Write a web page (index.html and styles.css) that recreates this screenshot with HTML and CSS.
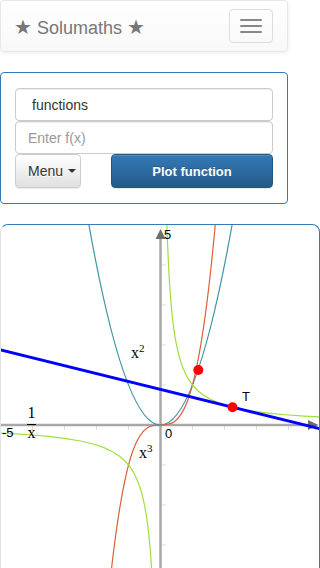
FILE: index.html
```html
<!DOCTYPE html>
<html lang="en">
<head>
<meta charset="utf-8">
<meta name="viewport" content="width=device-width, initial-scale=1">
<title>Solumaths</title>
<link rel="stylesheet" href="styles.css">
</head>
<body>
<div class="page">
  <nav class="navbar">
    <a class="brand" href="#"><span class="star">★</span> Solumaths <span class="star">★</span></a>
    <button class="toggle" type="button" aria-label="Toggle navigation">
      <span class="bar"></span><span class="bar"></span><span class="bar"></span>
    </button>
  </nav>

  <div class="form-panel">
    <input class="field field-search" type="text" value="functions">
    <input class="field field-fx" type="text" placeholder="Enter f(x)">
    <div class="actions">
      <button class="btn btn-menu" type="button">Menu <span class="caret"></span></button>
      <button class="btn btn-plot" type="button">Plot function</button>
    </div>
  </div>

  <div class="graph-panel">
    <svg class="graph" width="318" height="400" viewBox="1 0 318 400" xmlns="http://www.w3.org/2000/svg">
      <g class="ticks">
        <line x1="32.5" y1="200" x2="32.5" y2="205"/>
        <line x1="64.5" y1="200" x2="64.5" y2="205"/>
        <line x1="96.5" y1="200" x2="96.5" y2="205"/>
        <line x1="128.5" y1="200" x2="128.5" y2="205"/>
        <line x1="192.5" y1="200" x2="192.5" y2="205"/>
        <line x1="224.5" y1="200" x2="224.5" y2="205"/>
        <line x1="256.5" y1="200" x2="256.5" y2="205"/>
        <line x1="288.5" y1="200" x2="288.5" y2="205"/>
        <line x1="160.5" y1="40" x2="166" y2="40"/>
        <line x1="160.5" y1="80" x2="166" y2="80"/>
        <line x1="160.5" y1="120" x2="166" y2="120"/>
        <line x1="160.5" y1="160" x2="166" y2="160"/>
        <line x1="160.5" y1="240" x2="166" y2="240"/>
        <line x1="160.5" y1="280" x2="166" y2="280"/>
        <line x1="160.5" y1="320" x2="166" y2="320"/>
        <line x1="160.5" y1="360" x2="166" y2="360"/>
      </g>
      <g class="axes">
        <line x1="0" y1="200" x2="309" y2="200"/>
        <line x1="160.5" y1="12" x2="160.5" y2="400"/>
      </g>
      <g class="arrows">
        <polygon points="160.5,4 155.5,14 165.5,14"/>
        <polygon points="318.5,200 308,195 308,205"/>
      </g>
      <path class="curve sq" d="M88.5,-2.5 Q160.5,402.5 232.5,-2.5"/>
      <path class="curve cube" d="M105.46,403.5 C142.15,-3.5 178.85,403.5 215.54,-3.5"/>
      <path class="curve inv" d="M166.58,-10.5 L166.9,0 L167.54,18.18 L168.5,40 L169.46,57.14 L170.74,75 L172.02,88.89 L173.3,100 L174.9,111.11 L176.5,120 L178.42,128.57 L180.66,136.51 L182.9,142.86 L186.1,150 L189.3,155.56 L192.5,160 L197.3,165.22 L202.1,169.23 L208.5,173.33 L216.5,177.14 L224.5,180 L240.5,184 L256.5,186.67 L272.5,188.57 L288.5,190 L304.5,191.11 L320.5,192"/>
      <path class="curve inv" d="M154.42,410.5 L154.1,400 L153.46,381.82 L152.5,360 L151.54,342.86 L150.26,325 L148.98,311.11 L147.7,300 L146.1,288.89 L144.5,280 L142.58,271.43 L140.34,263.49 L138.1,257.14 L134.9,250 L131.7,244.44 L128.5,240 L123.7,234.78 L118.9,230.77 L112.5,226.67 L104.5,222.86 L96.5,220 L80.5,216 L64.5,213.33 L48.5,211.43 L32.5,210 L16.5,208.89 L0.5,208"/>
      <line class="tangent" x1="-1" y1="124.57" x2="322" y2="204.32"/>
      <circle class="dot" cx="198.3" cy="145" r="5"/>
      <circle class="dot" cx="232.5" cy="182.2" r="5"/>
      <text class="num" x="164" y="14">5</text>
      <text class="num" x="2" y="212">-5</text>
      <text class="num" x="165" y="213">0</text>
      <text class="num" x="242" y="176">T</text>
      <text class="math" x="131" y="133">x<tspan class="sup" dy="-6">2</tspan></text>
      <text class="math" x="139" y="233">x<tspan class="sup" dy="-6">3</tspan></text>
      <text class="math" x="27.5" y="193">1</text>
      <line class="frac" x1="27" y1="199.5" x2="36" y2="199.5"/>
      <text class="math" x="27.5" y="213">x</text>
    </svg>
  </div>
</div>
</body>
</html>
```
FILE: styles.css
```css
html, body {
  margin: 0;
  padding: 0;
  overflow: hidden;
  background: #fff;
}

body {
  font-family: "Liberation Sans", Arial, sans-serif;
  font-size: 14px;
  color: #333;
}

.navbar {
  display: flex;
  justify-content: space-between;
  align-items: flex-start;
  box-sizing: border-box;
  width: 288px;
  height: 52px;
  margin-bottom: 20px;
  border: 1px solid #e7e7e7;
  border-radius: 4px;
  background: linear-gradient(to bottom, #fff 0, #f8f8f8 100%);
  box-shadow: inset 0 1px 0 rgba(255, 255, 255, .15), 0 1px 5px rgba(0, 0, 0, .075);
}

.brand {
  display: block;
  padding: 16px 14px 0 13px;
  font-size: 18px;
  line-height: 20px;
  color: #777;
  text-decoration: none;
  white-space: nowrap;
}

.star {
  font-family: "DejaVu Sans", sans-serif;
  font-size: 20px;
  line-height: 20px;
}

.toggle {
  display: flex;
  flex-direction: column;
  align-items: center;
  justify-content: center;
  gap: 4px;
  box-sizing: border-box;
  width: 44px;
  height: 34px;
  margin: 8px 14px 0 0;
  padding: 0;
  border: 1px solid #ddd;
  border-radius: 4px;
  background: transparent;
}

.bar {
  display: block;
  width: 22px;
  height: 2px;
  border-radius: 1px;
  background: #888;
}

.form-panel {
  box-sizing: border-box;
  width: 288px;
  margin-bottom: 20px;
  padding: 15px 14px;
  border: 1px solid #337ab7;
  border-radius: 4px;
  background: #fff;
}

.field {
  display: block;
  box-sizing: border-box;
  width: 100%;
  height: 33px;
  margin: 0;
  padding: 0 12px;
  border: 1px solid #ccc;
  border-radius: 4px;
  font-family: "Liberation Sans", Arial, sans-serif;
  font-size: 14px;
  color: #333;
  background: #fff;
  box-shadow: inset 0 1px 1px rgba(0, 0, 0, .075);
  outline: none;
}

.field-search {
  padding-left: 16px;
}

.field::placeholder {
  color: #999;
  font-size: 14px;
  opacity: 1;
}

.actions {
  display: flex;
  justify-content: space-between;
  height: 34px;
}

.btn {
  box-sizing: border-box;
  height: 34px;
  margin: 0;
  border-radius: 4px;
  font-family: "Liberation Sans", Arial, sans-serif;
  font-size: 14px;
  cursor: pointer;
}

.btn-menu {
  display: flex;
  align-items: center;
  gap: 5px;
  width: 66px;
  padding: 0 0 0 12px;
  border: 1px solid #ccc;
  color: #333;
  background: linear-gradient(to bottom, #fff 0, #e0e0e0 100%);
  text-shadow: 0 1px 0 #fff;
  box-shadow: inset 0 1px 0 rgba(255, 255, 255, .15), 0 1px 1px rgba(0, 0, 0, .075);
}

.caret {
  display: inline-block;
  width: 0;
  height: 0;
  border-top: 4px solid #333;
  border-left: 4px solid transparent;
  border-right: 4px solid transparent;
}

.btn-plot {
  width: 162px;
  padding: 0;
  border: 1px solid #245580;
  color: #fff;
  font-size: 13px;
  font-weight: bold;
  background: linear-gradient(to bottom, #337ab7 0, #265a88 100%);
  text-shadow: 0 -1px 0 rgba(0, 0, 0, .2);
  box-shadow: inset 0 1px 0 rgba(255, 255, 255, .15), 0 1px 1px rgba(0, 0, 0, .075);
}

.graph-panel {
  box-sizing: border-box;
  width: 320px;
  height: 420px;
  border: 1px solid #337ab7;
  border-left-color: #e3e3e3;
  border-bottom: none;
  border-radius: 8px 8px 0 0;
  background: #fff;
}

.graph {
  display: block;
}

.ticks line {
  stroke: #dcdcdc;
  stroke-width: 1;
}

.axes line {
  stroke: #a8a8a8;
  stroke-width: 2.5;
}

.arrows polygon {
  fill: #6f6f6f;
}

.curve {
  fill: none;
  stroke-width: 1.2;
}

.sq {
  stroke: #3d95a7;
}

.cube {
  stroke: #dc5f3c;
}

.inv {
  stroke: #9ee03c;
}

.tangent {
  stroke: #0000ff;
  stroke-width: 3;
}

.dot {
  fill: #ff0000;
}

.num {
  font-family: "Liberation Sans", Arial, sans-serif;
  font-size: 13px;
  fill: #000;
}

.math {
  font-family: "Liberation Serif", "Times New Roman", serif;
  font-size: 16px;
  fill: #000;
}

.sup {
  font-size: 11px;
}

.frac {
  stroke: #000;
  stroke-width: 1;
}
```
